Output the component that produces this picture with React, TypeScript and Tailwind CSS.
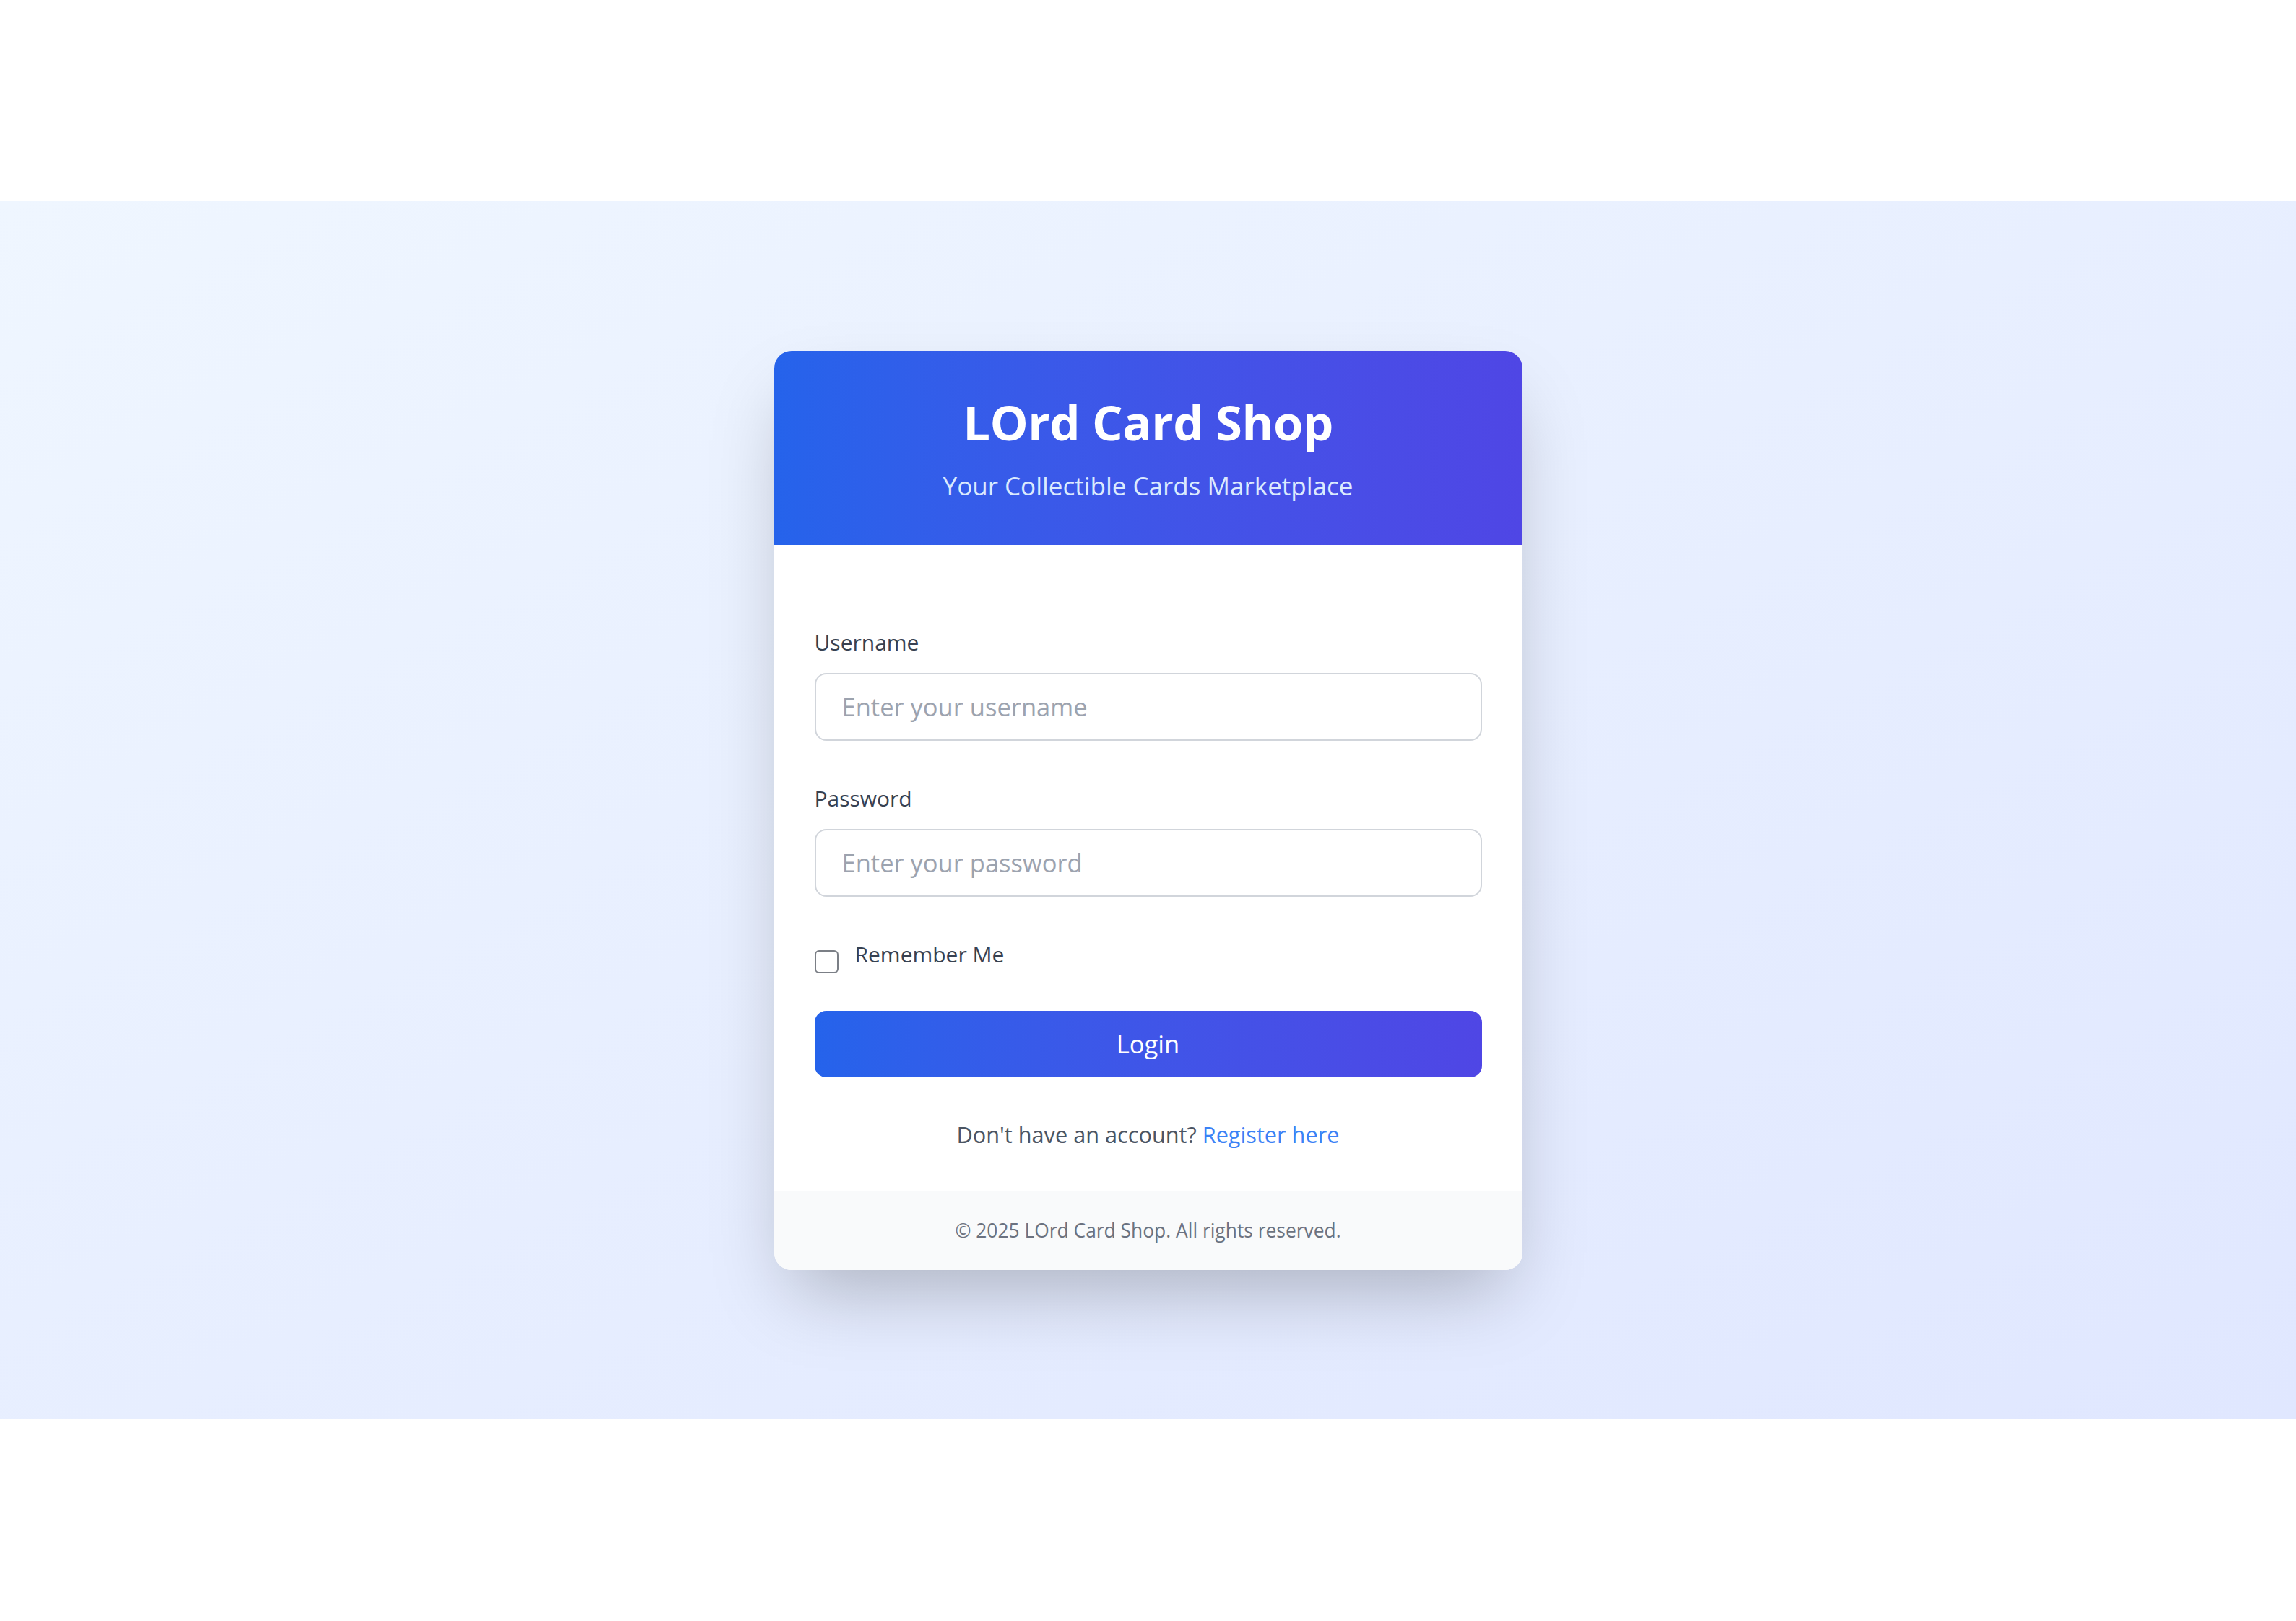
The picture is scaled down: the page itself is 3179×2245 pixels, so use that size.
import React from "react";

export default function App() {
  return (
    <div className="min-h-screen bg-white flex flex-col font-['Open_Sans','Noto_Sans',sans-serif]">
      <div className="h-[279px] shrink-0 bg-white" />
      <main className="h-[1686px] shrink-0 bg-gradient-to-br from-[#eff6ff] to-[#e0e7ff] flex items-center justify-center">
        <div className="w-[1036px] bg-white rounded-[24px] overflow-hidden shadow-[0_50px_100px_-24px_rgba(0,0,0,0.25)]">
          <div className="h-[269px] bg-gradient-to-r from-[#2563eb] to-[#4f46e5] flex flex-col items-center pt-[58px]">
            <h1 className="text-white font-bold text-[67px] leading-[81px] tracking-[-0.5px]">LOrd Card Shop</h1>
            <p className="text-[#dbeafe] text-[35px] leading-[57px] mt-[19px]">Your Collectible Cards Marketplace</p>
          </div>
          <form className="pt-[110px] px-[56px] pb-[53px] flex flex-col" onSubmit={(e) => e.preventDefault()}>
            <label className="text-[#374151] text-[30px] leading-[49px] mb-[18px]">Username</label>
            <input
              type="text"
              placeholder="Enter your username"
              className="h-[94px] w-full border-2 border-[#d1d5db] rounded-[16px] px-[36px] text-[34.5px] text-[#111827] placeholder:text-[#9ca3af] outline-none"
            />
            <label className="text-[#374151] text-[30px] leading-[49px] mb-[18px] mt-[55px]">Password</label>
            <input
              type="password"
              placeholder="Enter your password"
              className="h-[94px] w-full border-2 border-[#d1d5db] rounded-[16px] px-[36px] text-[34.5px] text-[#111827] placeholder:text-[#9ca3af] outline-none"
            />
            <div className="flex items-start h-[49px] mt-[55px]">
              <input
                type="checkbox"
                className="appearance-none w-[33px] h-[32px] mt-[19px] border-2 border-[#7b7f86] rounded-[6px] bg-white shrink-0"
              />
              <span className="ml-[23px] text-[#374151] text-[30px] leading-[49px]">Remember Me</span>
            </div>
            <button
              type="submit"
              className="mt-[54px] h-[92px] w-full rounded-[16px] bg-gradient-to-r from-[#2563eb] to-[#4f46e5] text-white text-[34.5px]"
            >
              Login
            </button>
            <p className="mt-[55px] text-center text-[30.7px] leading-[49px] text-[#4b5563]">
              Don't have an account? <a className="text-[#3b82f6]">Register here</a>
            </p>
          </form>
          <div className="h-[110px] bg-[#f9fafb] flex items-center justify-center">
            <p className="text-[#6b7280] text-[26.4px] leading-[40px]">© 2025 LOrd Card Shop. All rights reserved.</p>
          </div>
        </div>
      </main>
      <div className="h-[280px] shrink-0 bg-white" />
    </div>
  );
}
